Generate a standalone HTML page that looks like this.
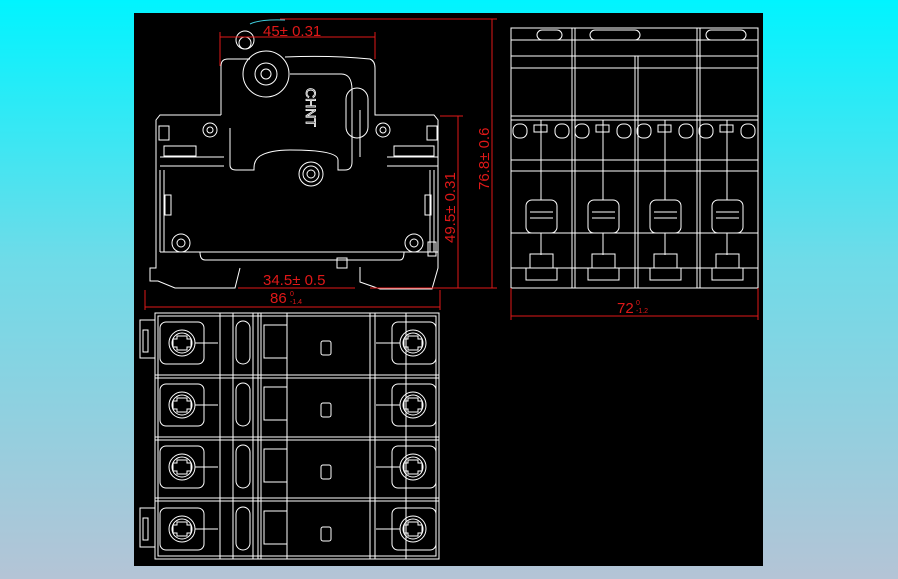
<!DOCTYPE html>
<html><head><meta charset="utf-8"><style>
html,body{margin:0;padding:0;width:898px;height:579px;overflow:hidden;background:linear-gradient(#00f4ff 0%,#6fdbe8 45%,#b4c4d6 100%);}
svg{position:absolute;left:0;top:0}
text{font-family:"Liberation Sans",sans-serif;fill:#e01818}
</style></head><body>
<svg width="898" height="579" viewBox="0 0 898 579">
<rect x="134" y="13" width="629" height="553" fill="#000"/>
<g fill="none" stroke="#fff" stroke-width="1">
<!-- side view -->
<path d="M221,115 V66 Q221,59 228,59 H250 M285,57 Q330,55 370,59 Q375,61 375,68 V115 H434 L438,120 V268 L432,289 H380 L360,282 V267"/>
<path d="M221,115 H160 L156,120 V268 L150,268 V281 H158 L175,288 H235 L240,268"/>
<path d="M230,128 V165 Q230,170 236,170 H254 V168 Q254,160 260,156 Q270,150 290,150 Q338,150 338,160 V170 H345 Q352,170 352,162 V90 Q352,73 340,74 H290"/>
<path d="M160,157 H224 M160,166 H224 M160,170 V252 M164,170 V252 M160,252 H438 M200,252 Q200,260 205,260 H400 Q404,260 404,252 M434,170 V252 M430,170 V252 M387,157 H438 M387,166 H438 M360,157 V110"/>
<circle cx="266" cy="74" r="23"/><circle cx="266" cy="74" r="11"/><circle cx="266" cy="74" r="5"/>
<circle cx="245" cy="40" r="9"/><circle cx="245" cy="43" r="6"/>
<circle cx="210" cy="130" r="7"/><circle cx="210" cy="130" r="3"/>
<circle cx="383" cy="130" r="7"/><circle cx="383" cy="130" r="3"/>
<circle cx="311" cy="174" r="12"/><circle cx="311" cy="174" r="8"/><circle cx="311" cy="174" r="4"/>
<circle cx="181" cy="243" r="9"/><circle cx="181" cy="243" r="4"/>
<circle cx="414" cy="243" r="9"/><circle cx="414" cy="243" r="4"/>
<rect x="346" y="88" width="22" height="50" rx="11"/>
<rect x="159" y="126" width="10" height="14"/><rect x="427" y="126" width="10" height="14"/>
<rect x="164" y="146" width="32" height="10"/><rect x="394" y="146" width="40" height="10"/>
<rect x="165" y="195" width="6" height="20"/><rect x="425" y="195" width="6" height="20"/>
<rect x="428" y="242" width="8" height="14"/><rect x="337" y="258" width="10" height="10"/>
<!-- top view -->
<rect x="155" y="313" width="284" height="246"/>
<rect x="158" y="316" width="278" height="240"/>
<path d="M155,375 H439 M155,378 H439 M155,437 H439 M155,440 H439 M155,498 H439 M155,501 H439"/>
<path d="M220,313 V559 M233,313 V559 M253,313 V559 M258,313 V559 M261,313 V559 M287,313 V559 M370,313 V559 M375,313 V559 M406,313 V559"/>
<path d="M140,320 H155 V358 H140 Z M143,330 H148 V352 H143 Z M140,508 H155 V547 H140 Z M143,518 H148 V540 H143 Z"/>
<g id="r">
<rect x="160" y="322" width="44" height="42" rx="6"/>
<rect x="392" y="322" width="44" height="42" rx="6"/>
<circle cx="182" cy="343" r="13"/><circle cx="182" cy="343" r="10"/>
<circle cx="413" cy="343" r="13"/><circle cx="413" cy="343" r="10"/>
<path d="M177,336 H187 V339 H191 V347 H187 V350 H177 V347 H173 V339 H177 Z M408,336 H418 V339 H422 V347 H418 V350 H408 V347 H404 V339 H408 Z M195,343 H218 M376,343 H400"/>
<rect x="321" y="341" width="10" height="14" rx="2"/>
<rect x="236" y="321" width="14" height="43" rx="7"/>
<rect x="264" y="325" width="23" height="33"/>
</g>
<use href="#r" y="62"/><use href="#r" y="124"/><use href="#r" y="186"/>
<!-- front view -->
<rect x="511" y="28" width="247" height="260"/>
<path d="M511,56 H758 M511,68 H758 M511,116 H758 M511,120 H758 M511,160 H758 M511,171 H758 M511,233 H758 M511,268 H758 M511,40 H758"/>
<path d="M572,28 V288 M575,28 V288 M635,56 V288 M638,56 V288 M697,28 V288 M700,28 V288"/>
<g id="p">
<rect x="526" y="200" width="31" height="33" rx="6"/><path d="M530,212 H553 M530,218 H553 M541,120 V200 M541,233 V255"/>
<rect x="530" y="254" width="23" height="14"/><rect x="526" y="268" width="31" height="12"/>
<rect x="534" y="125" width="13" height="7"/>
<rect x="513" y="124" width="14" height="14" rx="6"/>
<rect x="555" y="124" width="14" height="14" rx="6"/>
</g>
<use href="#p" x="62"/><use href="#p" x="124"/><use href="#p" x="186"/>
<rect x="537" y="30" width="25" height="10" rx="5"/><rect x="590" y="30" width="50" height="10" rx="5"/><rect x="706" y="30" width="40" height="10" rx="5"/>
</g>
<g stroke="#e01818" stroke-width="1" fill="none">
<path d="M220,37 H375 M220,32 V66 M375,32 V59 M280,19 H497 M492,19 V288 M458,116 V288 M440,116 H463 M370,288 H497 M238,288 H355 M145,307 H440 M145,290 V310 M440,290 V310 M511,316 H758 M511,288 V320 M758,288 V320"/>
</g>
<path d="M250,24 Q260,19 285,20" stroke="#40d0e0" fill="none"/>
<text x="263" y="36" font-size="15">45± 0.31</text>
<text x="263" y="285" font-size="15">34.5± 0.5</text>
<text x="270" y="303" font-size="15">86</text><text x="290" y="296" font-size="7">0</text><text x="290" y="304" font-size="7">-1.4</text>
<text x="617" y="313" font-size="15">72</text><text x="636" y="305" font-size="7">0</text><text x="636" y="313" font-size="7">-1.2</text>
<text transform="translate(489,190) rotate(-90)" font-size="15">76.8± 0.6</text>
<text transform="translate(455,243) rotate(-90)" font-size="15">49.5± 0.31</text>
<text transform="translate(306,88) rotate(90)" font-size="14" style="fill:none;stroke:#fff;stroke-width:0.8">CHNT</text>
</svg>
</body></html>
